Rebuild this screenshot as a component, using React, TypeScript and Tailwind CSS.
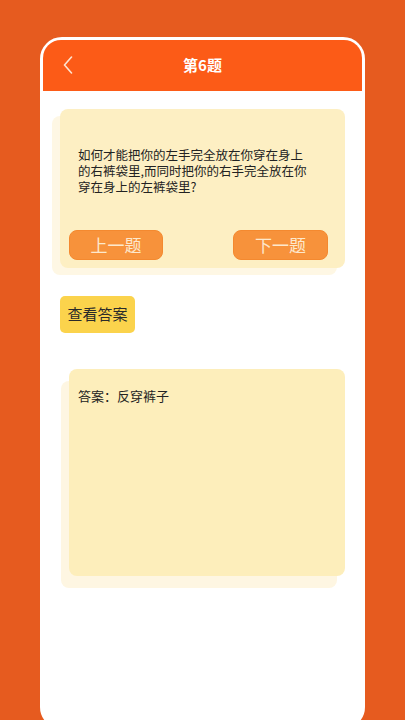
import React from "react";

const font = { fontFamily: '"Noto Sans CJK SC", "Noto Sans", sans-serif' };

const ChevronBack: React.FC = () => (
  <svg width="10" height="18" viewBox="0 0 10 18" fill="none">
    <polyline
      points="8.5,1 1.5,9 8.5,17"
      stroke="#fde3cf"
      strokeWidth="1.6"
      strokeLinecap="round"
      strokeLinejoin="round"
    />
  </svg>
);

const App: React.FC = () => {
  return (
    <div
      className="h-[720px] w-[405px] overflow-hidden bg-[#e65b1f] pt-[37px] pl-[40px]"
      style={font}
    >
      <div className="h-[692px] w-[325px] rounded-[22px] border-[3px] border-white bg-white">
        {/* Header */}
        <div className="relative flex h-[51px] items-center justify-center rounded-t-[18px] bg-[#fc5b17]">
          <div className="absolute left-[20px] top-[16px]">
            <ChevronBack />
          </div>
          <span className="text-[15px] font-bold text-white">第6题</span>
        </div>

        {/* Question card */}
        <div className="mt-[18px] ml-[17px] w-[285px] rounded-[8px] bg-[#fdefc3] pt-[38px] pb-[8px] shadow-[-8px_7px_0_#fef7e4]">
          <p className="whitespace-nowrap pl-[18px] text-[12.5px] leading-[16px] text-[#222]">
            如何才能把你的左手完全放在你穿在身上
            <br />
            的右裤袋里,而同时把你的右手完全放在你
            <br />
            穿在身上的左裤袋里?
          </p>
          <div className="mt-[35px] flex justify-between pl-[9px] pr-[17px]">
            <button className="h-[30px] w-[94px] rounded-[8px] border border-[#f4892f] bg-[#f7923b] text-[17px] text-[#fde8cc]">
              上一题
            </button>
            <button className="h-[30px] w-[95px] rounded-[8px] border border-[#f4892f] bg-[#f7923b] text-[17px] text-[#fde8cc]">
              下一题
            </button>
          </div>
        </div>

        {/* Show answer */}
        <button className="mt-[28px] ml-[17px] h-[37px] w-[75px] rounded-[5px] bg-[#fbd34c] text-[15px] text-[#2a2a2a]">
          查看答案
        </button>

        {/* Answer card */}
        <div className="mt-[36px] ml-[26px] h-[207px] w-[276px] rounded-[8px] bg-[#fdeebb] pt-[18px] pl-[9px] shadow-[-8px_12px_0_#fef6e2]">
          <p className="text-[13px] leading-[18px] text-[#222]">答案：反穿裤子</p>
        </div>
      </div>
    </div>
  );
};

export default App;
